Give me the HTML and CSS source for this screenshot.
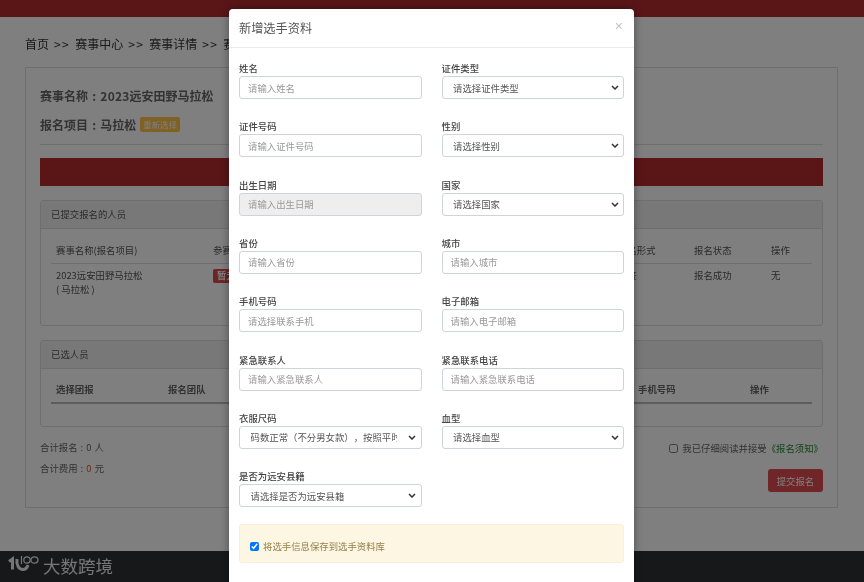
FILE: index.html
```html
<!DOCTYPE html>
<html lang="zh-CN">
<head>
<meta charset="utf-8">
<title>新增选手资料</title>
<link rel="stylesheet" href="styles.css">
</head>
<body>
<div class="page">
  <div class="topbar"></div>
  <nav class="crumbs">首页<span class="sep">&gt;&gt;</span>赛事中心<span class="sep">&gt;&gt;</span>赛事详情<span class="sep">&gt;&gt;</span>赛事报名</nav>
  <main class="card">
    <h2 class="heading">赛事名称 : <span class="num">2023</span>远安田野马拉松</h2>
    <div class="heading heading-project"><span>报名项目 : 马拉松</span><span class="tag">重新选择</span></div>
    <div class="redbar"></div>
    <section class="panel panel-one">
      <div class="panel-head">已提交报名的人员</div>
      <div class="panel-body">
        <div class="row row-one row-th">
          <span>赛事名称(报名项目)</span><span>参赛人员</span><span>费用</span><span>报名形式</span><span>报名状态</span><span>操作</span>
        </div>
        <div class="row row-one row-td">
          <span>2023远安田野马拉松<br>( 马拉松 )</span><span><em class="badge">暂无</em></span><span>0</span><span>抽签</span><span>报名成功</span><span>无</span>
        </div>
      </div>
    </section>
    <section class="panel panel-two">
      <div class="panel-head">已选人员</div>
      <div class="panel-body">
        <div class="row row-two row-th row-thick">
          <span>选择团报</span><span>报名团队</span><span>姓名</span><span>手机号码</span><span>操作</span>
        </div>
      </div>
    </section>
    <div class="summary">
      <div class="totals">
        <p>合计报名 : 0 人</p>
        <p>合计费用 : <b class="money">0</b> 元</p>
      </div>
      <div class="submit-box">
        <label class="agree"><input type="checkbox"><span>我已仔细阅读并接受</span><a>《报名须知》</a></label>
        <button class="submit" type="button">提交报名</button>
      </div>
    </div>
  </main>
  <footer class="footer">
    <svg class="logo" width="32" height="22" viewBox="0 0 32 22" fill="none" stroke="#ececec" aria-hidden="true">
      <path d="M1 6.5 L4.5 4 V14.5" stroke-width="3"/>
      <path d="M9 4 C8 10 11 14.5 15 14.5 C17.5 14.5 19 13 20 10" stroke-width="3"/>
      <path d="M13.5 1 V9" stroke-width="1.2"/>
      <ellipse cx="19" cy="5" rx="3.2" ry="3.2" stroke-width="1.2"/>
      <ellipse cx="26.5" cy="5" rx="3.5" ry="3.2" stroke-width="1.2"/>
    </svg>
    <span class="brand">大数跨境</span>
  </footer>
  <div class="backdrop"></div>
</div>

<div class="modal">
  <header class="modal-head">
    <h3>新增选手资料</h3>
    <span class="close">×</span>
  </header>
  <form class="modal-body">
    <div class="fields">
      <div class="field"><label>姓名</label><input class="control" placeholder="请输入姓名"></div>
      <div class="field"><label>证件类型</label><select class="control"><option>请选择证件类型</option></select></div>
      <div class="field"><label>证件号码</label><input class="control" placeholder="请输入证件号码"></div>
      <div class="field"><label>性别</label><select class="control"><option>请选择性别</option></select></div>
      <div class="field"><label>出生日期</label><input class="control" placeholder="请输入出生日期" disabled></div>
      <div class="field"><label>国家</label><select class="control"><option>请选择国家</option></select></div>
      <div class="field"><label>省份</label><input class="control" placeholder="请输入省份"></div>
      <div class="field"><label>城市</label><input class="control" placeholder="请输入城市"></div>
      <div class="field"><label>手机号码</label><input class="control" placeholder="请选择联系手机"></div>
      <div class="field"><label>电子邮箱</label><input class="control" placeholder="请输入电子邮箱"></div>
      <div class="field"><label>紧急联系人</label><input class="control" placeholder="请输入紧急联系人"></div>
      <div class="field"><label>紧急联系电话</label><input class="control" placeholder="请输入紧急联系电话"></div>
      <div class="field"><label>衣服尺码</label><select class="control"><option>码数正常（不分男女款），按照平时尺码选择</option></select></div>
      <div class="field"><label>血型</label><select class="control"><option>请选择血型</option></select></div>
      <div class="field"><label>是否为远安县籍</label><select class="control"><option>请选择是否为远安县籍</option></select></div>
    </div>
    <label class="notice"><input type="checkbox" checked><span>将选手信息保存到选手资料库</span></label>
  </form>
</div>
</body>
</html>
```
FILE: styles.css
```css
* { box-sizing: border-box; }
html, body { height: 100%; }
body {
  margin: 0;
  overflow: hidden;
  background: #fff;
  color: #333;
  font-family: "Noto Sans CJK SC", "Noto Sans", sans-serif;
  font-size: 9.4px;
  text-spacing-trim: space-all;
}
.page {
  position: relative;
  height: 582px;
  display: flex;
  flex-direction: column;
  background: #fff;
  filter: blur(.35px);
}
.backdrop { position: absolute; inset: 0; background: rgba(0,0,0,.5); }

.topbar { height: 17px; background: #b42a2e; flex: none; }
.crumbs { margin: 18px 0 0 25px; height: 18px; line-height: 18px; font-size: 12px; color: #333; flex: none; white-space: nowrap; }
.sep { margin: 0 5px; letter-spacing: 1.4px; }
.card {
  margin: 14px 26px 0 25px;
  height: 441px;
  border: 1px solid #ddd;
  padding: 14px 14px 0;
  flex: none;
}
.heading { margin: 0; font-size: 12px; line-height: 28px; font-weight: 700; color: #666; word-spacing: 1.5px; }
.num { letter-spacing: .2px; }
.heading-project {
  margin-top: 1px;
  height: 34px;
  padding-bottom: 6px;
  border-bottom: 1px solid #ddd;
  display: flex;
  align-items: center;
  gap: 4px;
}
.tag {
  height: 15px;
  padding: 0 3px;
  line-height: 15px;
  background: #ffc248;
  color: #fff;
  border-radius: 2px;
  font-size: 8.4px;
  font-weight: 400;
}
.redbar { height: 28px; margin-top: 13px; background: #b42a2e; }
.panel { border: 1px solid #ddd; border-radius: 3px; margin-top: 14px; }
.panel-one { height: 126px; }
.panel-two { height: 87px; margin-top: 14px; }
.panel-head { height: 28px; line-height: 26px; padding-left: 10px; background: #f0f0f0; border-bottom: 1px solid #ddd; color: #555; }
.panel-body { padding: 8px 10px 0; color: #555; }
.row { display: grid; line-height: 13.5px; }
.row > span { padding: 0 5px; min-width: 0; }
.row-one { grid-template-columns: 157px 135px 270px 76px 77px 47px; }
.row-two { grid-template-columns: 112px 200px 270px 112px 67px; }
.row-th { height: 27px; padding-top: 7px; border-bottom: 1px solid #ddd; }
.row-td { padding-top: 5px; }
.row-thick { border-bottom: 2px solid #bbb; padding-top: 6px; height: 27px; font-weight: 700; color: #666; }
.badge { display: inline-block; padding: 0 4px; background: #d84a4e; color: #fff; border-radius: 2px; font-style: normal; font-weight: 700; }
.summary { display: flex; justify-content: space-between; margin-top: 13px; }
.totals p { margin: 0 0 7px; line-height: 14px; color: #666; word-spacing: 1px; }
.money { color: #e0532a; font-weight: 400; }
.submit-box { display: flex; flex-direction: column; align-items: flex-end; }
.agree { display: flex; align-items: center; height: 14px; margin-top: 1px; color: #666; }
.agree input { margin: 0 4px 0 0; width: 9px; height: 9px; }
.agree a { color: #2a8a3c; }
.submit {
  margin-top: 14px;
  width: 55px;
  height: 23px;
  padding: 0;
  border: 0;
  border-radius: 3px;
  background: #e04c50;
  color: #fff;
  font: inherit;
}
.footer {
  margin-top: auto;
  height: 31px;
  background: #2e3034;
  display: flex;
  align-items: center;
  gap: 3px;
  padding: 0 0 1px 8px;
  flex: none;
}
.brand { color: #ececec; font-size: 17.5px; line-height: 1; }
.logo { flex: none; }

.modal {
  position: fixed;
  left: 229px;
  top: 9px;
  width: 405px;
  height: 600px;
  background: #fff;
  border-radius: 4px;
  box-shadow: 0 0 8px rgba(0,0,0,.4);
  filter: blur(.35px);
}
.modal-head {
  height: 39px;
  display: flex;
  align-items: center;
  justify-content: space-between;
  padding: 0 11px 0 10px;
  border-bottom: 1px solid #e9ecef;
}
.modal-head h3 { margin: 0; font-size: 12.2px; font-weight: 400; color: #555; }
.close { color: #c4c4c4; font-family: "Liberation Sans", sans-serif; font-size: 14px; line-height: 1; margin-top: -4px; }
.modal-body { padding: 14px 10px 0; }
.fields { display: grid; grid-template-columns: 182.5px 182.5px; column-gap: 20px; row-gap: 21.33px; }
.field { display: flex; flex-direction: column; height: 37px; }
.field label { height: 14px; line-height: 12px; color: #444; font-weight: 500; }
.control {
  height: 23px;
  width: 100%;
  padding: 0 8px;
  border: 1px solid #ced4da;
  border-radius: 3px;
  background-color: #fff;
  color: #555;
  font: inherit;
  outline: none;
}
select.control {
  padding: 0 24px 0 10.5px;
  appearance: none;
  background-image: url("data:image/svg+xml,%3Csvg xmlns='http://www.w3.org/2000/svg' width='8' height='5' viewBox='0 0 8 5'%3E%3Cpath d='M1 1l3 3 3-3' fill='none' stroke='%23333' stroke-width='1.5'/%3E%3C/svg%3E");
  background-repeat: no-repeat;
  background-position: right 4.5px center;
}
.control::placeholder { color: #999; opacity: 1; }
.control:disabled { background: #eee; }
.notice {
  display: flex;
  align-items: center;
  margin-top: 17px;
  height: 39px;
  padding: 5px 10px 0;
  gap: 4px;
  background: #fdf6e3;
  border: 1px solid #faf0d7;
  border-radius: 3px;
  color: #97804a;
}
.notice input { margin: 0; width: 9px; height: 9px; }
```
